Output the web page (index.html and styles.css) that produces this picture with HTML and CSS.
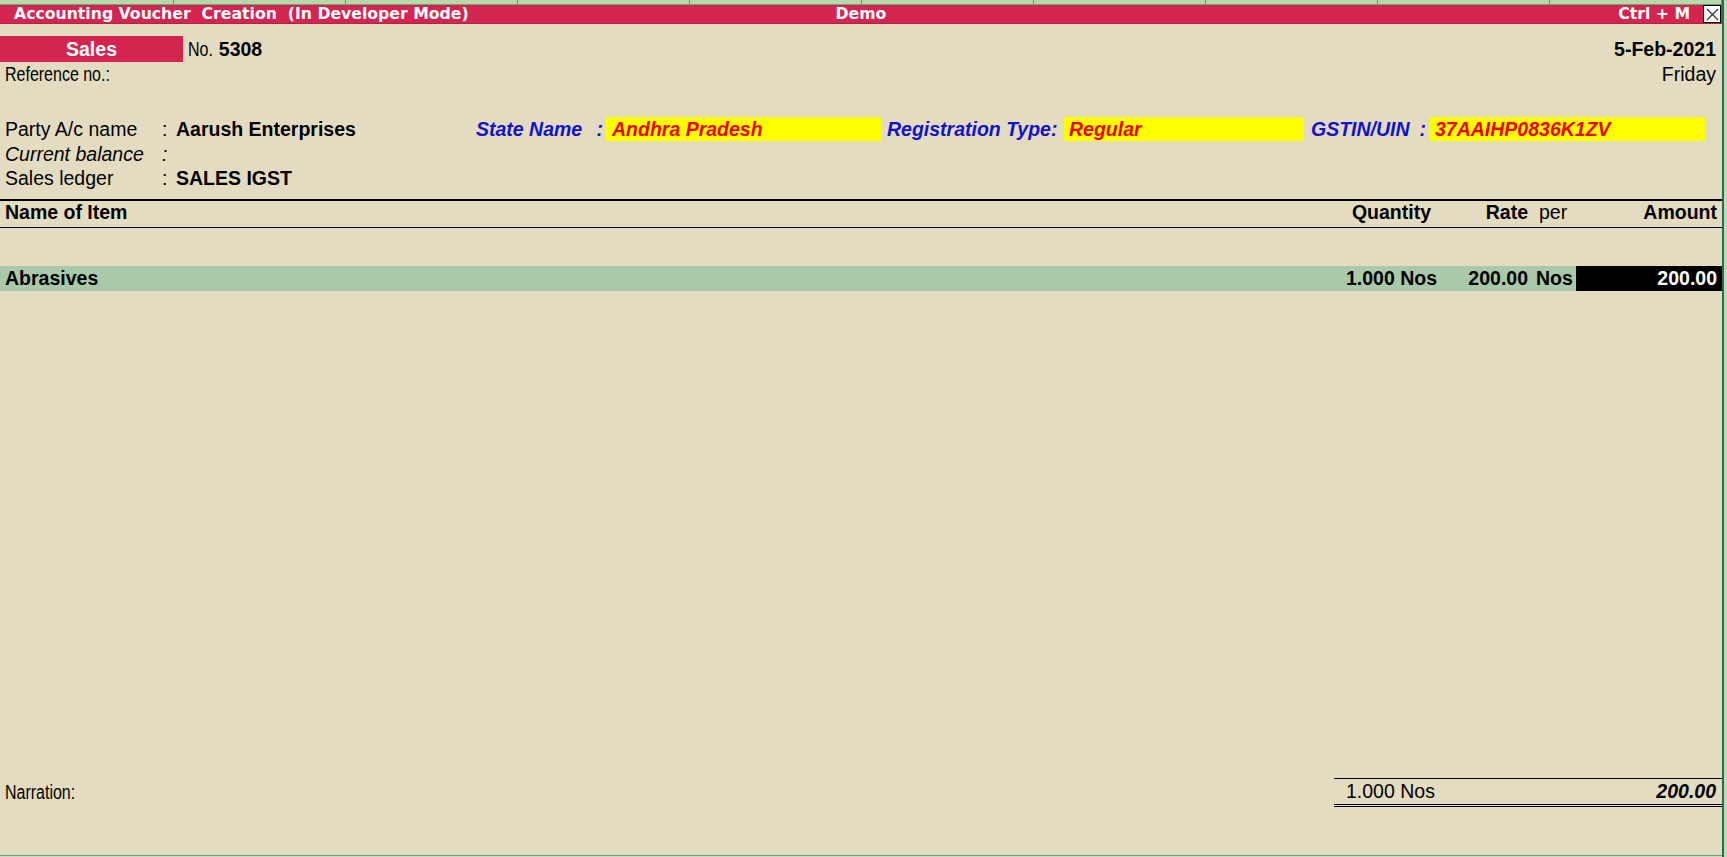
FILE: index.html
```html
<!DOCTYPE html>
<html lang="en">
<head>
<meta charset="utf-8">
<title>Accounting Voucher Creation</title>
<link rel="stylesheet" href="styles.css">
</head>
<body>
<div class="app">
  <div class="tabs">
    <span class="tab"></span><span class="tab"></span><span class="tab"></span><span class="tab"></span><span class="tab"></span>
    <span class="tab"></span><span class="tab"></span><span class="tab"></span><span class="tab"></span><span class="tab"></span>
  </div>
  <div class="titlebar">
    <div class="tb-left">Accounting Voucher  Creation  (In Developer Mode)</div>
    <div class="tb-center">Demo</div>
    <div class="tb-right">
      <span class="shortcut">Ctrl + M</span>
      <span class="close"><svg width="15" height="15" viewBox="0 0 15 15"><path d="M2 2 L13 13 M13 2 L2 13" stroke="#333" stroke-width="1.2" fill="none"/></svg></span>
    </div>
  </div>
  <div class="voucher">
    <div class="vhead">
      <div class="vtype">Sales</div>
      <div class="vno"><span class="narrow nolabel">No.</span> <b>5308</b></div>
      <div class="vdate">5-Feb-2021</div>
    </div>
    <div class="vhead2">
      <span class="narrow">Reference no.:</span>
      <span class="vday">Friday</span>
    </div>
    <div class="party">
      <div class="prow">
        <span class="plabel">Party A/c name</span><span class="pcolon">:</span><span class="pval">Aarush Enterprises</span>
        <span class="glabel glabel-state"><span>State Name</span><span>:</span></span><span class="gval gval-state">Andhra Pradesh</span>
        <span class="glabel glabel-reg">Registration Type:</span><span class="gval gval-reg">Regular</span>
        <span class="glabel glabel-gstin"><span>GSTIN/UIN</span><span>:</span></span><span class="gval gval-gstin">37AAIHP0836K1ZV</span>
      </div>
      <div class="prow prow-italic">
        <span class="plabel">Current balance</span><span class="pcolon">:</span>
      </div>
      <div class="prow">
        <span class="plabel">Sales ledger</span><span class="pcolon">:</span><span class="pval">SALES IGST</span>
      </div>
    </div>
    <div class="items-head grid">
      <span class="c-name">Name of Item</span>
      <span class="c-qty">Quantity</span>
      <span class="c-rate">Rate</span>
      <span class="c-per">per</span>
      <span class="c-amt">Amount</span>
    </div>
    <div class="items">
      <div class="item grid">
        <span class="c-name">Abrasives</span>
        <span class="c-qty">1.000 Nos</span>
        <span class="c-rate">200.00</span>
        <span class="c-per">Nos</span>
        <span class="c-amt">200.00</span>
      </div>
    </div>
    <div class="vfoot">
      <span class="narrow narration">Narration:</span>
      <div class="totals"><span>1.000 Nos</span><span class="tamt">200.00</span></div>
    </div>
  </div>
</div>
<div class="edge"></div>
</body>
</html>
```
FILE: styles.css
```css
html, body {
  margin: 0;
  padding: 0;
}
body {
  height: 857px;
  overflow: hidden;
  display: flex;
  background: #c6dbbf;
  font-family: "Liberation Sans", Arial, sans-serif;
  font-size: 19.5px;
  color: #000;
}
.app {
  flex: 1;
  display: flex;
  flex-direction: column;
  min-width: 0;
}
.edge {
  width: 5px;
  flex: none;
  box-sizing: border-box;
  border-left: 2px solid #2f6b4e;
  background: #c2d9bd;
}
.tabs {
  display: flex;
  height: 4px;
  background: #b6d8aa;
  border-bottom: 1px solid #7d9b7a;
  padding-left: 2px;
  overflow: hidden;
}
.tab {
  flex: none;
  width: 172px;
  box-sizing: border-box;
  border-right: 1px solid #6f8f70;
}
.titlebar {
  height: 18px;
  background: #d42551;
  border-bottom: 1px solid #b52247;
  display: grid;
  grid-template-columns: 1fr auto 1fr;
  align-items: center;
  font-family: "DejaVu Sans", Verdana, sans-serif;
  font-weight: bold;
  font-size: 15.7px;
  line-height: 18px;
  color: #fff;
}
.tb-left {
  padding-left: 14px;
  white-space: pre;
}
.tb-right {
  display: flex;
  justify-content: flex-end;
  align-items: flex-end;
  height: 18px;
}
.shortcut {
  margin-right: 13px;
}
.close {
  width: 18px;
  height: 18px;
  box-sizing: border-box;
  background: #fff;
  border: 1px solid #000;
  margin-right: 1px;
  display: flex;
  align-items: center;
  justify-content: center;
}
.voucher {
  flex: 1;
  background: #e3dcc1;
  display: flex;
  flex-direction: column;
  border-bottom: 1px solid #6f9a72;
  margin-bottom: 1px;
}
.vhead {
  display: flex;
  align-items: center;
  margin-top: 12px;
  height: 26px;
}
.vtype {
  width: 183px;
  height: 26px;
  line-height: 26px;
  background: #d42551;
  color: #fff;
  font-weight: bold;
  text-align: center;
}
.vno {
  margin-left: 5px;
  white-space: nowrap;
}
.narrow {
  display: inline-block;
  transform: scaleX(0.82);
  transform-origin: 0 50%;
  white-space: nowrap;
}
.nolabel {
  margin-right: -5px;
}
.vdate {
  margin-left: auto;
  font-weight: bold;
  padding-right: 6px;
}
.vhead2 {
  display: flex;
  justify-content: space-between;
  height: 24px;
  line-height: 24px;
  padding: 0 6px 0 5px;
}
.party {
  margin-top: 31px;
}
.prow {
  display: flex;
  height: 24.5px;
  line-height: 24.5px;
  padding-left: 5px;
  white-space: nowrap;
}
.prow-italic {
  font-style: italic;
}
.plabel {
  width: 157px;
  flex: none;
}
.pcolon {
  width: 14px;
  flex: none;
}
.pval {
  width: 300px;
  flex: none;
  font-weight: bold;
}
.glabel {
  flex: none;
  color: #1212cc;
  font-weight: bold;
  font-style: italic;
  display: flex;
  justify-content: space-between;
  box-sizing: border-box;
}
.glabel-state {
  width: 130px;
  padding-right: 3px;
}
.glabel-reg {
  width: 177px;
  margin-left: 6px;
}
.glabel-gstin {
  width: 119px;
  margin-left: 7px;
  padding-right: 4px;
}
.gval {
  flex: none;
  height: 24px;
  box-sizing: border-box;
  background: #ffff00;
  color: #f00000;
  font-weight: bold;
  font-style: italic;
  padding-left: 6px;
}
.gval-state {
  width: 275px;
}
.gval-reg {
  width: 240px;
  padding-left: 5px;
}
.gval-gstin {
  width: 275px;
  padding-left: 5px;
}
.grid {
  display: grid;
  grid-template-columns: 1fr 110px 90px 45px 146px;
  white-space: nowrap;
}
.items-head {
  margin-top: 8px;
  border-top: 2px solid #000;
  border-bottom: 1px solid #000;
  height: 26px;
  line-height: 22px;
  font-weight: bold;
}
.items-head .c-name { padding-left: 5px; }
.items-head .c-qty { text-align: right; padding-right: 10px; }
.items-head .c-rate { text-align: right; padding-right: 3px; }
.items-head .c-per { font-weight: normal; padding-left: 8px; }
.items-head .c-amt { text-align: right; padding-right: 5px; }
.items {
  flex: 1;
  padding-top: 38px;
}
.item {
  height: 25px;
  line-height: 25px;
  font-weight: bold;
  background: #a9c9a9;
}
.item .c-name { padding-left: 5px; }
.item .c-qty { text-align: right; padding-right: 4px; }
.item .c-rate { text-align: right; padding-right: 3px; }
.item .c-per { padding-left: 5px; }
.item .c-amt { text-align: right; padding-right: 5px; background: #000; color: #fff; }
.vfoot {
  display: flex;
  align-items: center;
  justify-content: space-between;
  margin-bottom: 48px;
  padding-left: 5px;
}
.totals {
  width: 370px;
  height: 25px;
  line-height: 25px;
  border-top: 1px solid #000;
  border-bottom: 3px double #000;
  display: flex;
  justify-content: space-between;
  padding: 0 6px 0 12px;
}
.tamt {
  font-weight: bold;
  font-style: italic;
}
```
